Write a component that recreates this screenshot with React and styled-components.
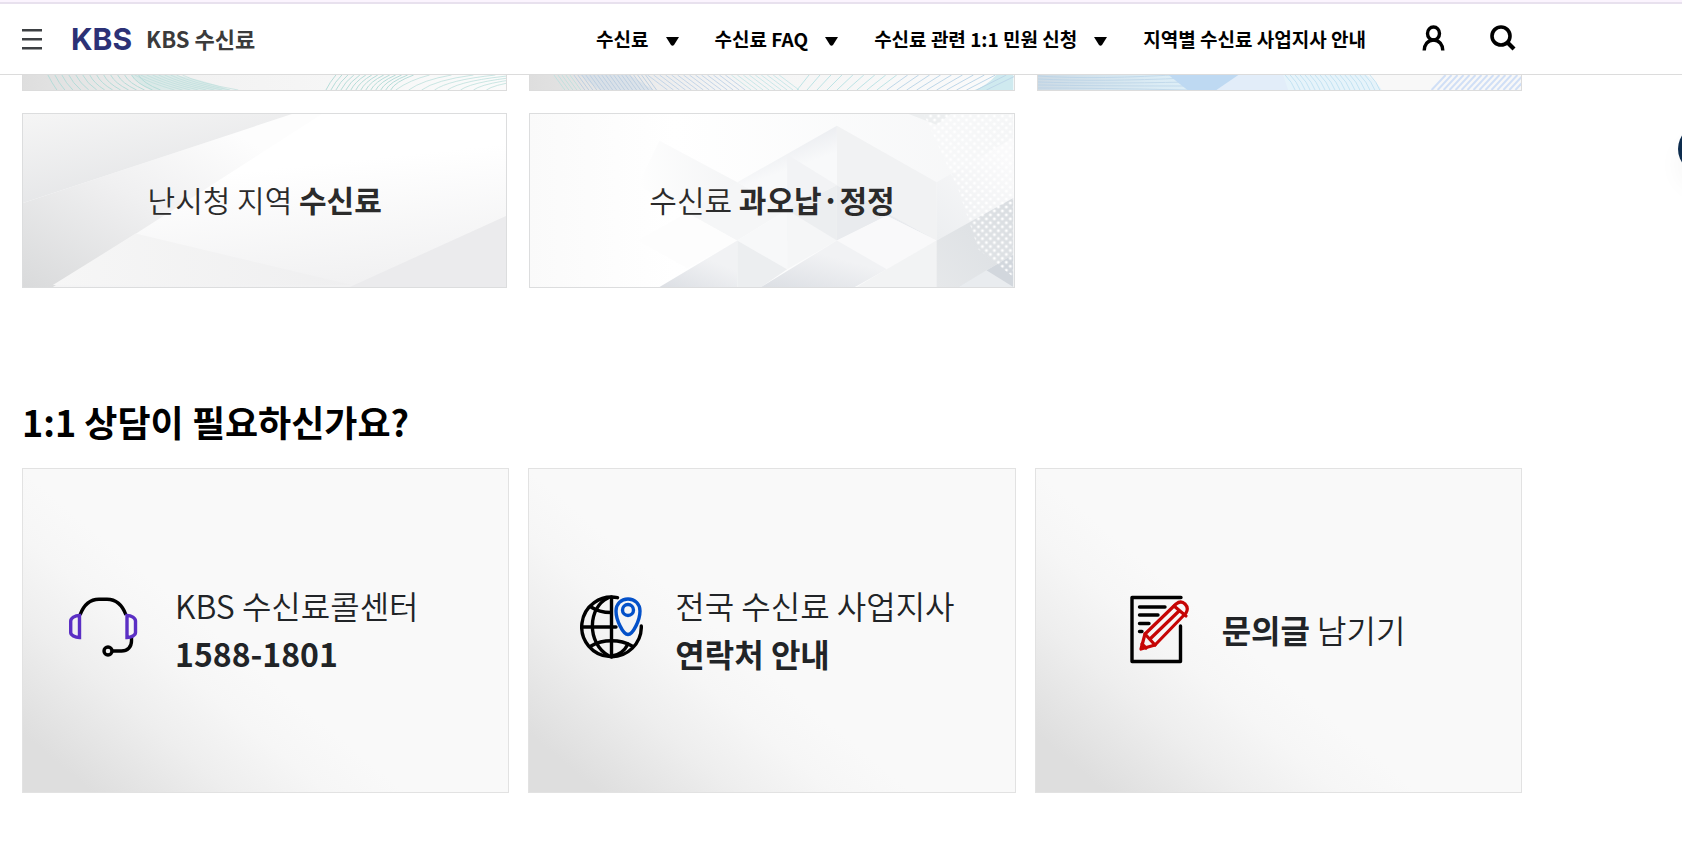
import React from 'react';

import styled, { createGlobalStyle } from 'styled-components';

const MENUS = [
    { name: '수신료', hasSub: true },
    { name: '수신료 FAQ', hasSub: true },
    { name: '수신료 관련 1:1 민원 신청', hasSub: true },
    { name: '지역별 수신료 사업지사 안내', hasSub: false },
];

const range = (count) => Array.from({ length: count }, (_, i) => i);

const App = () => {
    return (
        <>
            <GlobalStyle />
            <Header>
                <HeaderInner>
                    <MenuButton aria-label="전체 메뉴"><MenuIcon /></MenuButton>
                    <Logo href="#kbs">KBS</Logo>
                    <SiteName href="#home">KBS 수신료</SiteName>
                    <Nav>
                        {MENUS.map(({ name, hasSub }) => (
                            hasSub
                                ? <NavButton key={name}>{name}<ArrowIcon /></NavButton>
                                : <NavLink key={name} href="#branch">{name}</NavLink>
                        ))}
                    </Nav>
                    <Tools>
                        <ToolButton aria-label="로그인"><UserIcon /></ToolButton>
                        <ToolButton aria-label="검색"><SearchIcon /></ToolButton>
                    </Tools>
                </HeaderInner>
            </Header>
            <Main>
                <TileGrid>
                    <TileEnd><TealWave /></TileEnd>
                    <TileEnd><BlueWave /></TileEnd>
                    <TileEnd><SkyWave /></TileEnd>
                    <Tile href="#area">
                        <PaperArt />
                        <TileText>난시청 지역 <strong>수신료</strong></TileText>
                    </Tile>
                    <Tile href="#refund">
                        <CubeArt />
                        <TileText>수신료 <strong>과오납·정정</strong></TileText>
                    </Tile>
                </TileGrid>
                <Title>1:1 상담이 필요하신가요?</Title>
                <HelpGrid>
                    <HelpCard href="#call" $indent={46}>
                        <HeadsetIcon />
                        <HelpText>KBS 수신료콜센터<br /><strong>1588-1801</strong></HelpText>
                    </HelpCard>
                    <HelpCard href="#contact" $indent={51}>
                        <GlobeIcon />
                        <HelpText>전국 수신료 사업지사<br /><strong>연락처 안내</strong></HelpText>
                    </HelpCard>
                    <HelpCard href="#write" $indent={94}>
                        <NoteIcon />
                        <HelpText><strong>문의글</strong> 남기기</HelpText>
                    </HelpCard>
                </HelpGrid>
            </Main>
            <FloatButton aria-label="퀵메뉴" />
        </>
    )
}

/* icons */
const MenuIcon = () => (
    <svg width="20" height="22" viewBox="0 0 20 22" fill="#3d4043">
        <path d="M0 1h20v2.500H0zM0 10h20v2.500H0zM0 19h20v2.500H0z" />
    </svg>
);

const ArrowIcon = () => (
    <svg width="13" height="13" viewBox="0 0 13 13">
        <path d="M0 4h13L8 12q-1.500 1.500-3 0z" />
    </svg>
);

const UserIcon = () => (
    <svg width="23" height="26" viewBox="0 0 23 26" fill="none" stroke="#000" strokeWidth="3.400">
        <ellipse cx="11.500" cy="8.500" rx="6" ry="6.500" />
        <path d="M2.200 25.500c0-5.500 3.500-10.500 9.300-10.500s9.300 5 9.300 10.500" />
    </svg>
);

const SearchIcon = () => (
    <svg width="26" height="26" viewBox="0 0 26 26" fill="none" stroke="#000">
        <circle cx="11" cy="11" r="9" strokeWidth="3.600" />
        <path d="M17 17l7 7" strokeWidth="4.200" />
    </svg>
);

const HeadsetIcon = () => (
    <svg width="74" height="72" viewBox="0 0 74 72" fill="none" strokeWidth="3.400">
        <path d="M11 20C15 9 22 4.200 30 4.200h8c8 0 15 4.800 19 15.800" stroke="#000" />
        <path d="M62.500 42v4c0 6-4 10-10 10H43" stroke="#000" />
        <circle cx="39" cy="56" r="4" stroke="#000" />
        <path d="M10.500 20.500v22c-4.500 0-8.800-2.500-8.800-5V26c0-3 4.300-5.500 8.800-5.500z" stroke="#5b2fc4" />
        <path d="M58 20.500v22c4.500 0 8.500-2.500 8.500-5V26c0-3-4-5.500-8.500-5.500z" stroke="#5b2fc4" />
    </svg>
);

const GlobeIcon = () => (
    <svg width="63" height="72" viewBox="0 0 63 72" fill="none" strokeWidth="3.400" strokeLinecap="round">
        <g stroke="#000">
            <path d="M37.500 2.700A29.800 29.800 0 1 0 61.300 31" />
            <path d="M31.500 2v60M2 32h34" />
            <path d="M28 3C8 12 6 48 29 61" />
            <path d="M11 12c6 4 12 5.500 20 5.500" />
            <path d="M11 51c12-7 29-7 41 0" />
            <path d="M32 61c7-1 13-6 16-12" />
        </g>
        <g stroke="#0451c9">
            <path d="M48 4c-7 0-12 5-12 12 0 9 7 23.500 12 23.500S60 25 60 16c0-7-5-12-12-12z" />
            <circle cx="48" cy="15" r="5.500" />
        </g>
    </svg>
);

const NoteIcon = () => (
    <svg width="60" height="72" viewBox="0 0 60 72" fill="none" strokeLinecap="round" strokeLinejoin="round">
        <path d="M51 2.500H2v64h48.500V31" stroke="#000" strokeWidth="3.400" />
        <path d="M9.500 12H35M9.500 20H28M9.500 28.500H19M9.500 36.500h2.500" stroke="#000" strokeWidth="3.400" />
        <g stroke="#c60505" strokeWidth="3.200">
            <path d="M11 54l4-15L46 9q5-4 9 0t1 9L25 50z" />
            <path d="M15 39l10 11M44 11l12 10M20 44l29-28" />
            <path d="M12 49l4 4" />
        </g>
    </svg>
);

/* tile backgrounds */
const TealWave = () => (
    <Art viewBox="0 0 485 15" preserveAspectRatio="none">
        <defs>
            <linearGradient id="tealBg">
                <stop offset="0" stopColor="#dedede" />
                <stop offset="0.350" stopColor="#f2f2f2" />
                <stop offset="1" stopColor="#fbfbfb" />
            </linearGradient>
        </defs>
        <rect width="485" height="15" fill="url(#tealBg)" />
        <path d="M108 0h44q30 5 56 15h-80q-14-7-20-15z" fill="#cfe6e4" opacity="0.600" />
        <g fill="none" stroke="#b5dcd8">
            {range(14).map((i) => (
                <path key={i} d={`M${25 + i * 7} 0q4 8 ${9 + i} 15`} />
            ))}
            {range(9).map((i) => (
                <path key={i} d={`M${112 + i * 6} 0q16 8 ${40 + i * 2} 15`} opacity="0.600" />
            ))}
            {range(14).map((i) => (
                <path key={i} d={`M${304 + i * 5} 15q4-8 ${10 + i} -15`} />
            ))}
            {range(8).map((i) => (
                <path key={i} d={`M${374 + i * 13} 15q14-10 ${34 + i * 9} -15`} opacity="0.700" />
            ))}
        </g>
    </Art>
);

const BlueWave = () => (
    <Art viewBox="0 0 485 15" preserveAspectRatio="none">
        <defs>
            <linearGradient id="blueBg">
                <stop offset="0" stopColor="#dedede" />
                <stop offset="0.400" stopColor="#f4f4f4" />
                <stop offset="1" stopColor="#fbfbfb" />
            </linearGradient>
        </defs>
        <rect width="485" height="15" fill="url(#blueBg)" />
        <path d="M50 0h50l24 15H70z" fill="#ccdae8" opacity="0.500" />
        <path d="M468 0h17v15h-39q12-4 22-15z" fill="#cfeaef" />
        <g fill="none">
            {range(24).map((i) => (
                <path key={i} d={`M${24 + i * 4} 0l11 15`} stroke={i < 5 ? '#c1e0df' : '#bccfe2'} />
            ))}
            {range(23).map((i) => (
                <path key={i} d={`M${118 + i * 6} 0l20 15`} stroke={i < 14 ? '#c3d5e8' : '#c9e7e9'} />
            ))}
            {range(20).map((i) => (
                <path key={i} d={`M${268 + i * 10} 15l${12 + i} -15`} stroke={i < 9 ? '#bde3e5' : '#bdd6e8'} />
            ))}
        </g>
    </Art>
);

const SkyWave = () => (
    <Art viewBox="0 0 485 15" preserveAspectRatio="none">
        <defs>
            <linearGradient id="skyBg">
                <stop offset="0" stopColor="#cddbe5" />
                <stop offset="0.350" stopColor="#dbecf5" />
                <stop offset="0.700" stopColor="#e6f3fa" />
            </linearGradient>
        </defs>
        <rect width="485" height="15" fill="#f8f8f8" />
        <path d="M0 0h330q10 7 15 15H0z" fill="url(#skyBg)" />
        <g fill="none" stroke="#b3cfe6" opacity="0.600">
            {range(5).map((i) => (
                <path key={i} d={`M0 ${i * 3 + 1}q60 ${4 - i} 150 ${i - 2}`} />
            ))}
        </g>
        <path d="M180 0h66l5 15h-91z" fill="#e2edf9" />
        <path d="M131 0h70l-22 15h-29z" fill="#bed9f2" />
        <g fill="none" stroke="#c2e2f2">
            {range(18).map((i) => (
                <path key={i} d={`M${248 + i * 5} 0q7 7 10 15`} />
            ))}
        </g>
        <g stroke="#d0dff6" strokeWidth="2">
            {range(16).map((i) => (
                <path key={i} d={`M${395 + i * 6} 15l14 -15`} />
            ))}
        </g>
    </Art>
);

const PaperArt = () => (
    <Art viewBox="0 0 485 175" preserveAspectRatio="none">
        <defs>
            <linearGradient id="paperBase" x1="0.300" y1="0" x2="0.600" y2="1">
                <stop offset="0.350" stopColor="#ffffff" />
                <stop offset="1" stopColor="#f1f1f2" />
            </linearGradient>
            <linearGradient id="paperTop" x1="0" y1="0" x2="0.500" y2="1">
                <stop offset="0" stopColor="#f5f5f5" />
                <stop offset="1" stopColor="#e3e4e6" />
            </linearGradient>
            <linearGradient id="paperLeft" x1="1" y1="0" x2="0" y2="1">
                <stop offset="0.200" stopColor="#fdfdfd" />
                <stop offset="0.550" stopColor="#f0f0f1" />
                <stop offset="1" stopColor="#d9dadb" />
            </linearGradient>
            <linearGradient id="paperFoot">
                <stop offset="0" stopColor="#f6f6f6" />
                <stop offset="1" stopColor="#efeff0" />
            </linearGradient>
        </defs>
        <rect width="485" height="175" fill="url(#paperBase)" />
        <path d="M270 0h30L30 175H0V90z" fill="url(#paperLeft)" />
        <path d="M0 0h270L0 90z" fill="url(#paperTop)" />
        <path d="M113 121l217 52H30z" fill="url(#paperFoot)" />
        <path d="M485 103v72H328z" fill="#ebebed" />
    </Art>
);

const CubeArt = () => (
    <Art viewBox="0 0 485 175" preserveAspectRatio="none">
        <defs>
            <linearGradient id="cubeBase">
                <stop offset="0" stopColor="#fafafa" />
                <stop offset="0.300" stopColor="#ffffff" />
                <stop offset="1" stopColor="#f5f6f7" />
            </linearGradient>
            <linearGradient id="cubeSide" x1="1" y1="0.500" x2="0" y2="0.600">
                <stop offset="0" stopColor="#f4f5f6" />
                <stop offset="1" stopColor="#fefefe" />
            </linearGradient>
            <linearGradient id="cubeFace" x1="0.300" y1="0.200" x2="0.600" y2="0.900">
                <stop offset="0" stopColor="#e9ebef" />
                <stop offset="0.500" stopColor="#f8f9fa" />
            </linearGradient>
            <linearGradient id="cubeFoot" x1="0" y1="1" x2="0.500" y2="0.300">
                <stop offset="0" stopColor="#dcdfe4" />
                <stop offset="1" stopColor="#f1f2f4" />
            </linearGradient>
            <linearGradient id="cubeWall" x1="0" y1="1" x2="1" y2="0">
                <stop offset="0" stopColor="#e6e8ea" />
                <stop offset="1" stopColor="#d9dde1" />
            </linearGradient>
            <linearGradient id="cubeRoof" x1="0" y1="1" x2="0.600" y2="0">
                <stop offset="0" stopColor="#eceef0" />
                <stop offset="1" stopColor="#fafafb" />
            </linearGradient>
            <pattern id="cubeDots" width="8" height="8" patternUnits="userSpaceOnUse">
                <circle cx="2" cy="2" r="1.500" fill="#fff" />
                <circle cx="6" cy="6" r="1.500" fill="#fff" />
            </pattern>
        </defs>
        <rect width="485" height="175" fill="url(#cubeBase)" />
        <path d="M130 27l78 42v59l-100-56z" fill="url(#cubeSide)" />
        <path d="M158 156l50-28-50-28-50 28z" fill="#fdfdfd" />
        <path d="M208 69l50 28-50 31-50-28z" fill="#f5f6f7" />
        <path d="M208 69L308 12v60l-50 25z" fill="url(#cubeFace)" />
        <path d="M308 12l100 57v59l-100-56z" fill="#f1f2f3" />
        <path d="M258 41l50 31-50 25z" fill="#f2f3f5" />
        <path d="M308 72l-50 25v31h50z" fill="#eceef0" />
        <path d="M208 128l50-31v60z" fill="#f7f8f9" />
        <path d="M258 97l50 31-50 29z" fill="#f5f6f7" />
        <path d="M308 72l100 56-50-25-50 25z" fill="#e9ebee" />
        <path d="M308 128l50-25 50 25-50 29z" fill="#f9f9fa" />
        <path d="M208 128L130 175h78z" fill="url(#cubeFoot)" />
        <path d="M208 128l50 29-26 18h-24z" fill="#eceef0" />
        <path d="M308 128l-76 47h94l32-18z" fill="url(#cubeFoot)" />
        <path d="M408 128l-50 29-30 18h80z" fill="#f2f3f4" />
        <path d="M408 69l77-45v62l-77 42z" fill="url(#cubeRoof)" />
        <path d="M408 128l77-43v57l-55 33h-22z" fill="url(#cubeWall)" />
        <path d="M485 142v33h-55z" fill="#d2d7dd" />
        <path d="M430 175l28-17 27 17z" fill="#e9ecef" />
        <path d="M380 0h42l-14 11z" fill="#edeff0" />
        <path d="M395 0h90v165l-35-28-20-60z" fill="url(#cubeDots)" />
    </Art>
);

const GlobalStyle = createGlobalStyle`
    * {
        box-sizing: border-box;
    }
    body {
        margin: 0;
        background: #fff;
        color: #000;
        font-family: "Noto Sans CJK KR", sans-serif;
    }
    a {
        color: inherit;
        text-decoration: none;
    }
    button {
        padding: 0;
        border: 0;
        background: none;
        color: inherit;
        font-family: inherit;
        cursor: pointer;
    }
    strong {
        font-weight: 700;
    }
    svg {
        display: block;
        flex-shrink: 0;
    }
`;
const Header = styled.header`
    border-top: 2px solid #fbf4fe;
    border-bottom: 1px solid #dcdcdc;
    background: #fff;
`;
const HeaderInner = styled.div`
    display: flex;
    align-items: center;
    height: 72px;
    padding-left: 22px;
    padding-right: max(28px, calc(100% - 1516px));
    border-top: 2px solid #e8e1ee;
`;
const MenuButton = styled.button`
    margin-right: 29px;
`;
const Logo = styled.a`
    margin-right: 14px;
    color: #2c3176;
    font-family: Inter, sans-serif;
    font-size: 30px;
    font-weight: 700;
    line-height: 30px;
`;
const SiteName = styled.a`
    padding-bottom: 2px;
    color: #3b3b3b;
    font-size: 22px;
    font-weight: 700;
    line-height: 32px;
`;
const Nav = styled.nav`
    display: flex;
    align-items: center;
    gap: 36px;
    margin-left: auto;
`;
const NavButton = styled.button`
    display: flex;
    align-items: center;
    gap: 17px;
    font-size: 19px;
    font-weight: 700;
    line-height: 28px;
`;
const NavLink = styled.a`
    font-size: 19px;
    font-weight: 700;
    line-height: 28px;
`;
const Tools = styled.div`
    display: flex;
    gap: 45px;
    margin-left: 56px;
`;
const ToolButton = styled.button`
    padding-bottom: 2px;
`;
const Main = styled.main`
    max-width: 1544px;
    padding: 0 22px 64px;
`;
const TileGrid = styled.div`
    display: grid;
    grid-template-columns: repeat(3, 1fr);
    gap: 22px;
`;
/* only the lower end of the first row shows under the header */
const TileEnd = styled.div`
    height: 16px;
    border: 1px solid #dcdcdc;
    border-top: 0;
`;
const Tile = styled.a`
    display: grid;
    height: 175px;
    border: 1px solid #dcddde;
`;
const Art = styled.svg`
    grid-area: 1 / 1;
    width: 100%;
    height: 100%;
`;
const TileText = styled.span`
    grid-area: 1 / 1;
    place-self: center;
    padding-bottom: 4px;
    color: #2b2b2b;
    font-size: 30px;
    font-weight: 350;
    line-height: 44px;
`;
const Title = styled.h2`
    margin: 106px 0 20px;
    font-size: 36px;
    font-weight: 700;
    line-height: 54px;
`;
const HelpGrid = styled.div`
    display: grid;
    grid-template-columns: repeat(3, 1fr);
    gap: 19px;
`;
const HelpCard = styled.a`
    display: flex;
    align-items: center;
    gap: 32px;
    height: 325px;
    padding-left: ${({ $indent }) => $indent}px;
    border: 1px solid #e2e2e2;
    background: linear-gradient(40deg, #dedede 8%, #eeeeee 24%, #f6f6f6 35%, #f9f9f9 44%);
`;
const HelpText = styled.span`
    padding-bottom: 4px;
    color: #212427;
    font-size: 32px;
    font-weight: 350;
    line-height: 48px;
`;
const FloatButton = styled.button`
    position: fixed;
    top: 124px;
    right: -46px;
    width: 50px;
    height: 50px;
    border-radius: 50%;
    background: #0d2c4e;
    box-shadow: 0 16px 24px rgba(0, 0, 0, 0.040);
`;

export default App;
